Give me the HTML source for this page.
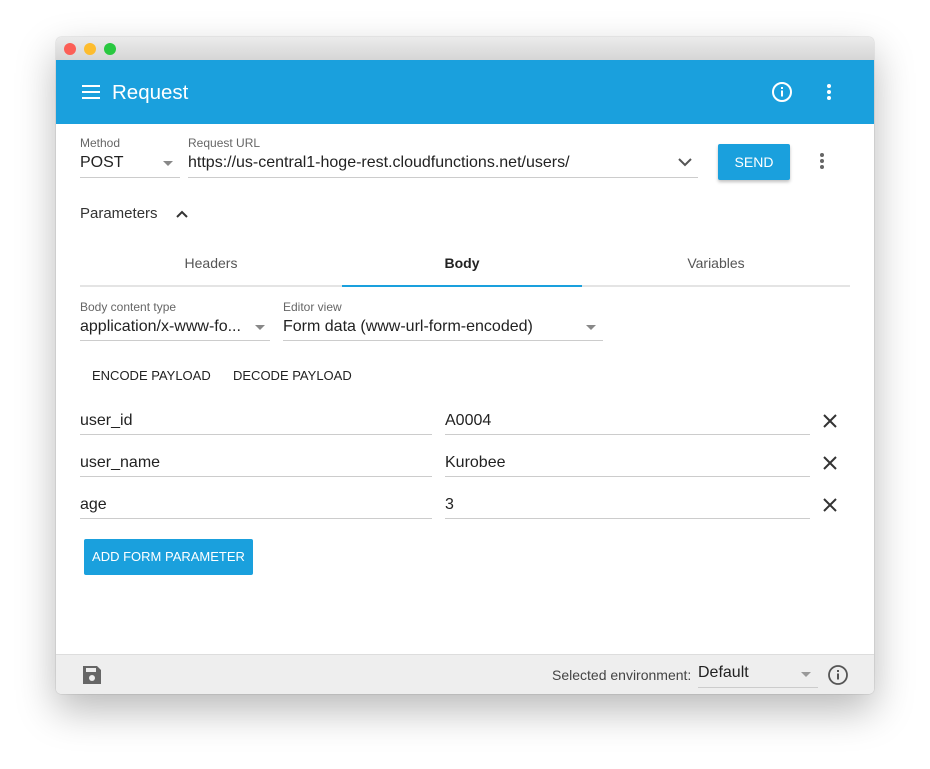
<!DOCTYPE html>
<html><head><meta charset="utf-8"><style>
*{box-sizing:border-box;margin:0;padding:0}
body{width:930px;height:769px;background:#fff;font-family:"Liberation Sans",Arial,sans-serif;position:relative;overflow:hidden;color:#222}
.win{position:absolute;left:56px;top:37px;width:818px;height:657px;border-radius:5px;overflow:hidden;box-shadow:0 16px 40px rgba(0,0,0,.28),0 0 1px rgba(0,0,0,.4);background:#fff}
.title{height:23px;background:linear-gradient(#ebebeb,#d6d6d6);position:relative}
.dot{position:absolute;top:6px;width:12px;height:12px;border-radius:50%}
.hdr{height:64px;background:#1aa0dd;position:relative;color:#fff}
.a{position:absolute}
.lbl{font-size:12px;color:#666}
.val{font-size:16px;color:#222}
.line{position:absolute;height:1px;background:#ccc}
.tri{position:absolute;width:0;height:0;border-left:5px solid transparent;border-right:5px solid transparent;border-top:5px solid #888}
</style></head><body>
<div class="win">
<div class="title">
<div class="dot" style="left:8px;background:#fc5f57"></div>
<div class="dot" style="left:28px;background:#fdbc2e"></div>
<div class="dot" style="left:48px;background:#29c840"></div>
</div>
<div class="hdr">
<div class="a" style="left:26px;top:25px;width:18px;height:2px;background:#fff;box-shadow:0 6px 0 #fff,0 12px 0 #fff"></div>
<div class="a" style="left:56px;top:21px;font-size:20.5px">Request</div>
<svg class="a" style="left:714px;top:20px" width="24" height="24" viewBox="0 0 24 24"><circle cx="12" cy="12" r="9" fill="none" stroke="#fff" stroke-width="2"/><rect x="11" y="10.5" width="2" height="6" fill="#fff"/><rect x="11" y="7" width="2" height="2" fill="#fff"/></svg>
<div class="a" style="left:771px;top:24px;width:4px;height:4px;border-radius:2px;background:#fff;box-shadow:0 6px 0 #fff,0 12px 0 #fff"></div>
</div>
<div class="a lbl" style="left:24px;top:99px">Method</div>
<div class="a val" style="left:24px;top:117px">POST</div>
<div class="tri" style="left:107px;top:124px"></div>
<div class="line" style="left:24px;top:140px;width:100px"></div>
<div class="a lbl" style="left:132px;top:99px">Request URL</div>
<div class="a val" style="left:132px;top:117px">https://us-central1-hoge-rest.cloudfunctions.net/users/</div>
<svg class="a" style="left:621px;top:119px" width="16" height="12" viewBox="0 0 16 12"><path d="M2 3l6 6 6-6" fill="none" stroke="#555" stroke-width="2"/></svg>
<div class="line" style="left:132px;top:140px;width:510px"></div>
<div class="a" style="left:662px;top:107px;width:72px;height:36px;background:#1aa0dd;border-radius:2px;color:#fff;font-size:14px;text-align:center;line-height:36px;box-shadow:0 2px 3px rgba(0,0,0,.25)">SEND</div>
<div class="a" style="left:764px;top:116px;width:4px;height:4px;border-radius:2px;background:#666;box-shadow:0 6px 0 #666,0 12px 0 #666"></div>
<div class="a val" style="left:24px;top:168px;font-size:15px;color:#333">Parameters</div>
<svg class="a" style="left:118px;top:171px" width="16" height="12" viewBox="0 0 16 12"><path d="M3 9l5-5 5 5" fill="none" stroke="#333" stroke-width="2"/></svg>
<div class="a" style="left:24px;top:218px;width:262px;text-align:center;font-size:14px;color:#555">Headers</div>
<div class="a" style="left:286px;top:218px;width:240px;text-align:center;font-size:14px;color:#222;font-weight:bold">Body</div>
<div class="a" style="left:526px;top:218px;width:268px;text-align:center;font-size:14px;color:#555">Variables</div>
<div class="a" style="left:24px;top:248px;width:770px;height:2px;background:#e4e4e4"></div>
<div class="a" style="left:286px;top:248px;width:240px;height:2px;background:#1aa0dd"></div>
<div class="a lbl" style="left:24px;top:263px">Body content type</div>
<div class="a val" style="left:24px;top:281px">application/x-www-fo...</div>
<div class="tri" style="left:199px;top:288px"></div>
<div class="line" style="left:24px;top:303px;width:190px"></div>
<div class="a lbl" style="left:227px;top:263px">Editor view</div>
<div class="a val" style="left:227px;top:281px">Form data (www-url-form-encoded)</div>
<div class="tri" style="left:530px;top:288px"></div>
<div class="line" style="left:227px;top:303px;width:320px"></div>
<div class="a" style="left:36px;top:331px;font-size:13px;color:#222">ENCODE PAYLOAD</div>
<div class="a" style="left:177px;top:331px;font-size:13px;color:#222">DECODE PAYLOAD</div>
<div class="a val" style="left:24px;top:375px">user_id</div><div class="line" style="left:24px;top:397px;width:352px"></div>
<div class="a val" style="left:389px;top:375px">A0004</div><div class="line" style="left:389px;top:397px;width:365px"></div>
<div class="a val" style="left:24px;top:417px">user_name</div><div class="line" style="left:24px;top:439px;width:352px"></div>
<div class="a val" style="left:389px;top:417px">Kurobee</div><div class="line" style="left:389px;top:439px;width:365px"></div>
<div class="a val" style="left:24px;top:459px">age</div><div class="line" style="left:24px;top:481px;width:352px"></div>
<div class="a val" style="left:389px;top:459px">3</div><div class="line" style="left:389px;top:481px;width:365px"></div>
<svg class="a" style="left:766px;top:376px" width="16" height="16" viewBox="0 0 16 16"><path d="M2 2l12 12M14 2L2 14" stroke="#333" stroke-width="2"/></svg>
<svg class="a" style="left:766px;top:418px" width="16" height="16" viewBox="0 0 16 16"><path d="M2 2l12 12M14 2L2 14" stroke="#333" stroke-width="2"/></svg>
<svg class="a" style="left:766px;top:460px" width="16" height="16" viewBox="0 0 16 16"><path d="M2 2l12 12M14 2L2 14" stroke="#333" stroke-width="2"/></svg>
<div class="a" style="left:28px;top:502px;width:169px;height:36px;background:#1aa0dd;border-radius:2px;color:#fff;font-size:13px;text-align:center;line-height:36px;white-space:nowrap">ADD FORM PARAMETER</div>
<div class="a" style="left:0;top:617px;width:818px;height:40px;background:#eeeeee;border-top:1px solid #ddd"></div>
<svg class="a" style="left:26px;top:628px" width="20" height="20" viewBox="0 0 20 20"><path d="M1 1h14l4 4v14H1z" fill="#666"/><rect x="4" y="3" width="10" height="4" fill="#eee"/><circle cx="10" cy="13" r="3" fill="#eee"/></svg>
<div class="a" style="left:496px;top:630px;font-size:14px;color:#444">Selected environment:</div>
<div class="a val" style="left:642px;top:627px">Default</div>
<div class="tri" style="left:745px;top:635px;border-top-color:#999"></div>
<div class="line" style="left:642px;top:650px;width:120px"></div>
<svg class="a" style="left:771px;top:627px" width="22" height="22" viewBox="0 0 22 22"><circle cx="11" cy="11" r="9" fill="none" stroke="#555" stroke-width="1.8"/><rect x="10" y="9.5" width="2" height="6" fill="#555"/><rect x="10" y="6" width="2" height="2" fill="#555"/></svg>
</div>
</body></html>
